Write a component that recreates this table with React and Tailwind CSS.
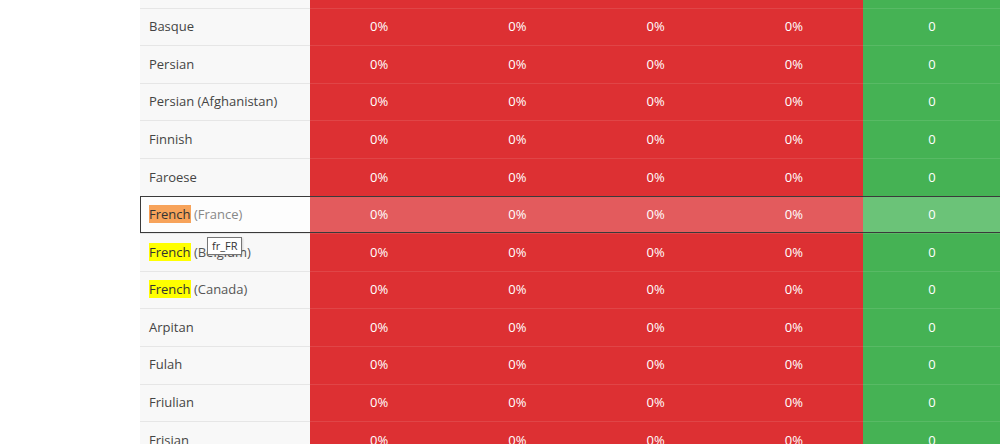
const rows = [
  { name: "Estonian" },
  { name: "Basque" },
  { name: "Persian" },
  { name: "Persian (Afghanistan)" },
  { name: "Finnish" },
  { name: "Faroese" },
  { name: "French", region: "(France)", match: true, hover: true, code: "fr_FR" },
  { name: "French", region: "(Belgium)", match: true },
  { name: "French", region: "(Canada)", match: true },
  { name: "Arpitan" },
  { name: "Fulah" },
  { name: "Friulian" },
  { name: "Frisian" },
];

const LangCell = ({ row }) => (
  <div
    className={`flex items-center pl-[9px] border-t border-[#e6e6e6] ${
      row.hover ? "bg-[#fdfdfd]" : "bg-[#f8f8f8]"
    }`}
  >
    {row.match ? (
      <span>
        <span
          className={`text-[#333] ${row.hover ? "bg-[#f7a35a]" : "bg-[#ffff00]"}`}
        >
          {row.name}
        </span>{" "}
        <span className={row.hover ? "text-[#888]" : "text-[#555]"}>{row.region}</span>
      </span>
    ) : (
      <span className="text-[#444]">{row.name}</span>
    )}
  </div>
);

const App = () => {
  return (
    <div
      className="w-[1000px] h-[444px] overflow-hidden bg-white text-[13px]"
      style={{ fontFamily: '"Open Sans", "Noto Sans", sans-serif' }}
    >
      <div className="ml-[140px] -mt-[30px] w-[1005px] flex flex-col">
        {rows.map((row, i) => (
          <div
            key={i}
            className={`grid grid-cols-[170px_repeat(4,138.25px)_142px] h-[37.6px] ${
              row.hover ? "relative z-10 outline-1 outline-[#3a3a3a] -outline-offset-1" : ""
            }`}
          >
            <LangCell row={row} />
            {[0, 1, 2, 3].map((c) => (
              <div
                key={c}
                className={`flex items-center justify-center text-white border-t border-white/10 ${
                  row.hover ? "bg-[#e35b5d]" : "bg-[#dd3033]"
                }`}
              >
                0%
              </div>
            ))}
            <div
              className={`flex items-center justify-center pr-[4px] text-white border-t border-white/10 ${
                row.hover ? "bg-[#6bc378]" : "bg-[#45b254]"
              }`}
            >
              0
            </div>
            {row.code && (
              <div className="absolute left-[67px] top-[41px] z-20 bg-white border border-[#767676] px-[4px] py-[1px] text-[11px] leading-[14px] text-[#333] shadow-[1px_1px_2px_rgba(0,0,0,0.15)]">
                {row.code}
              </div>
            )}
          </div>
        ))}
      </div>
    </div>
  );
};

export default App;
